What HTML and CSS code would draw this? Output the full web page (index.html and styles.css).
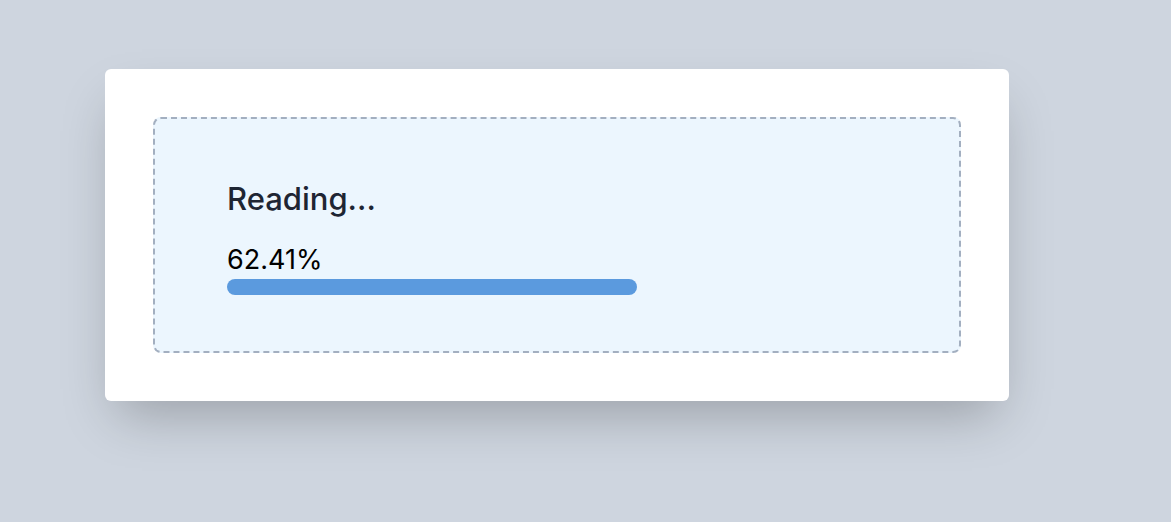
FILE: index.html
```html
<!DOCTYPE html>
<html lang="en">
<head>
    <meta charset="UTF-8">
    <meta name="viewport" content="width=device-width, initial-scale=1.0">
    <title>Reading</title>
    <link rel="stylesheet" href="styles.css">
</head>
<body>
    <div class="card">
        <div class="drop">
            <h2 class="status">Reading...</h2>
            <div class="percent">62.41%</div>
            <div class="track">
                <div class="fill" style="width: 62.41%"></div>
            </div>
        </div>
    </div>
</body>
</html>
```

FILE: styles.css
```css
* {margin: 0; padding: 0; box-sizing: border-box;}

body
{
    min-height: 100vh;
    background: #ced5df;
    font-family: Inter, "Noto Sans", sans-serif;
    padding: 69px 0 0 105px;
}

.card
{
    width: 904px;
    height: 332px;
    background: #fff;
    border-radius: 6px;
    padding: 48px;
    box-shadow: 0 25px 50px -12px rgba(0, 0, 0, 0.25);
}

.drop
{
    height: 100%;
    background: #ecf6fe;
    border: 2px dashed #a3afc0;
    border-radius: 8px;
    padding: 61px 75px 0 72px;
}

.status
{
    font-size: 31px;
    font-weight: 500;
    color: #1e2533;
    line-height: 38px;
}

.percent
{
    margin-top: 27px;
    font-size: 27px;
    color: #000;
    line-height: 30px;
}

.track
{
    height: 16px;
    margin-top: 4px;
}

.fill
{
    height: 100%;
    background: #5b9ade;
    border-radius: 8px;
}
```
